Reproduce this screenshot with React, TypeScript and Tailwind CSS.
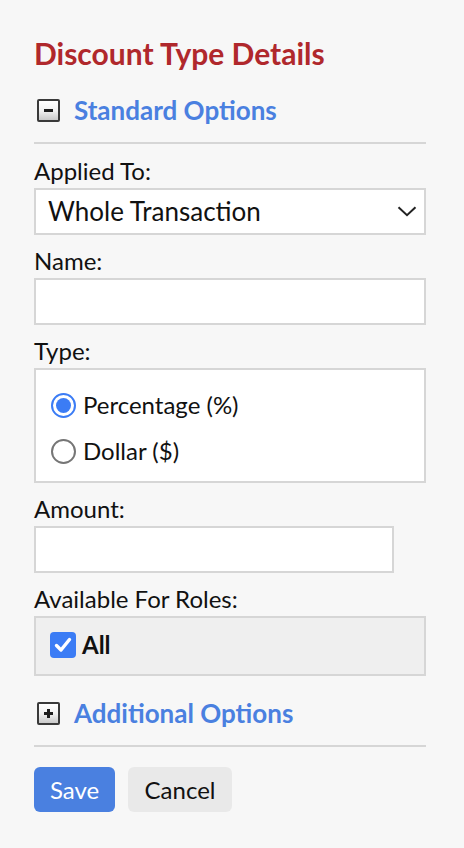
import { useState } from 'react'

function ToggleIcon({ open }: { open: boolean }) {
  return (
    <span className="relative flex h-[23px] w-[23px] items-center justify-center rounded-[2px] border-2 border-[#3a3a3a] bg-gradient-to-b from-white via-[#f2f2f2] to-[#c9c9c9]">
      <span className="absolute h-[3px] w-[9px] bg-[#1e1e1e]" />
      {!open && <span className="absolute h-[9px] w-[3px] bg-[#1e1e1e]" />}
    </span>
  )
}

function SectionHeader({ title, open }: { title: string; open: boolean }) {
  return (
    <div className="flex h-[40px] items-center gap-[14px] pl-[3px]">
      <ToggleIcon open={open} />
      <span className="text-[26px] font-bold text-[#4a80e0]">{title}</span>
    </div>
  )
}

function Label({ children }: { children: React.ReactNode }) {
  return <label className="mb-[2px] block text-[24px] leading-[30px] text-[#111]">{children}</label>
}

export default function App() {
  const [type, setType] = useState<'pct' | 'dollar'>('pct')
  const [all, setAll] = useState(true)

  return (
    <div className="min-h-[848px] w-full bg-[#f7f7f7] pl-[34px] pr-[38px] pt-[35px] font-['Lato','Liberation_Sans',sans-serif] text-[#111]">
      <h2 className="text-[30px] font-bold leading-[36px] text-[#b0282c]">Discount Type Details</h2>

      <div className="mt-[19px]">
        <SectionHeader title="Standard Options" open />
      </div>
      <div className="mt-[12px] h-[2px] bg-[#d6d6d6]" />

      <div className="mt-[12px] flex flex-col gap-[11px]">
        <div>
          <Label>Applied To:</Label>
          <div className="flex h-[47px] items-center justify-between border-2 border-[#d6d6d6] bg-white pl-[12px] pr-[7px]">
            <span className="text-[26px]">Whole Transaction</span>
            <svg width="20" height="11" viewBox="0 0 20 11" fill="none">
              <path d="M1.5 1.2 L10 9.2 L18.5 1.2" stroke="#222" strokeWidth="2" />
            </svg>
          </div>
        </div>

        <div>
          <Label>Name:</Label>
          <input className="block h-[47px] w-full border-2 border-[#d6d6d6] bg-white px-[12px] text-[24px] outline-none" />
        </div>

        <div>
          <Label>Type:</Label>
          <div className="border-2 border-[#d6d6d6] bg-white pb-[7px] pl-[15px] pt-[12px]">
            {[
              { key: 'pct' as const, label: 'Percentage (%)' },
              { key: 'dollar' as const, label: 'Dollar ($)' },
            ].map(({ key, label }) => (
              <button key={key} onClick={() => setType(key)} className="flex h-[46px] items-center gap-[7px] text-[24px]">
                {type === key ? (
                  <span className="flex h-[25px] w-[25px] items-center justify-center rounded-full border-[2.5px] border-[#3b7cf5]">
                    <span className="h-[15px] w-[15px] rounded-full bg-[#3b7cf5]" />
                  </span>
                ) : (
                  <span className="h-[25px] w-[25px] rounded-full border-2 border-[#767676]" />
                )}
                {label}
              </button>
            ))}
          </div>
        </div>

        <div>
          <Label>Amount:</Label>
          <input className="block h-[47px] w-[360px] border-2 border-[#d6d6d6] bg-white px-[12px] text-[24px] outline-none" />
        </div>

        <div>
          <Label>Available For Roles:</Label>
          <div className="flex h-[60px] items-center border-2 border-[#d6d6d6] bg-[#efefef] pb-[2px] pl-[14px]">
            <button onClick={() => setAll(!all)} className="flex items-center gap-[6px] text-[24px] font-bold">
              <span className="flex h-[26px] w-[26px] items-center justify-center rounded-[4px] bg-[#3b7cf5]">
                {all && (
                  <svg width="18" height="16" viewBox="0 0 18 16" fill="none">
                    <path d="M2.5 8.5 L7 13 L15.5 2.5" stroke="#fff" strokeWidth="3.4" strokeLinecap="round" strokeLinejoin="round" />
                  </svg>
                )}
              </span>
              All
            </button>
          </div>
        </div>
      </div>

      <div className="mt-[17px]">
        <SectionHeader title="Additional Options" open={false} />
      </div>
      <div className="mt-[12px] h-[2px] bg-[#d6d6d6]" />

      <div className="mt-[20px] flex gap-[13px]">
        <button className="h-[45px] w-[81px] rounded-[6px] bg-[#4a80e0] text-[24px] text-white">Save</button>
        <button className="h-[45px] w-[104px] rounded-[6px] bg-[#e9e9e9] text-[24px] text-[#111]">Cancel</button>
      </div>
    </div>
  )
}
